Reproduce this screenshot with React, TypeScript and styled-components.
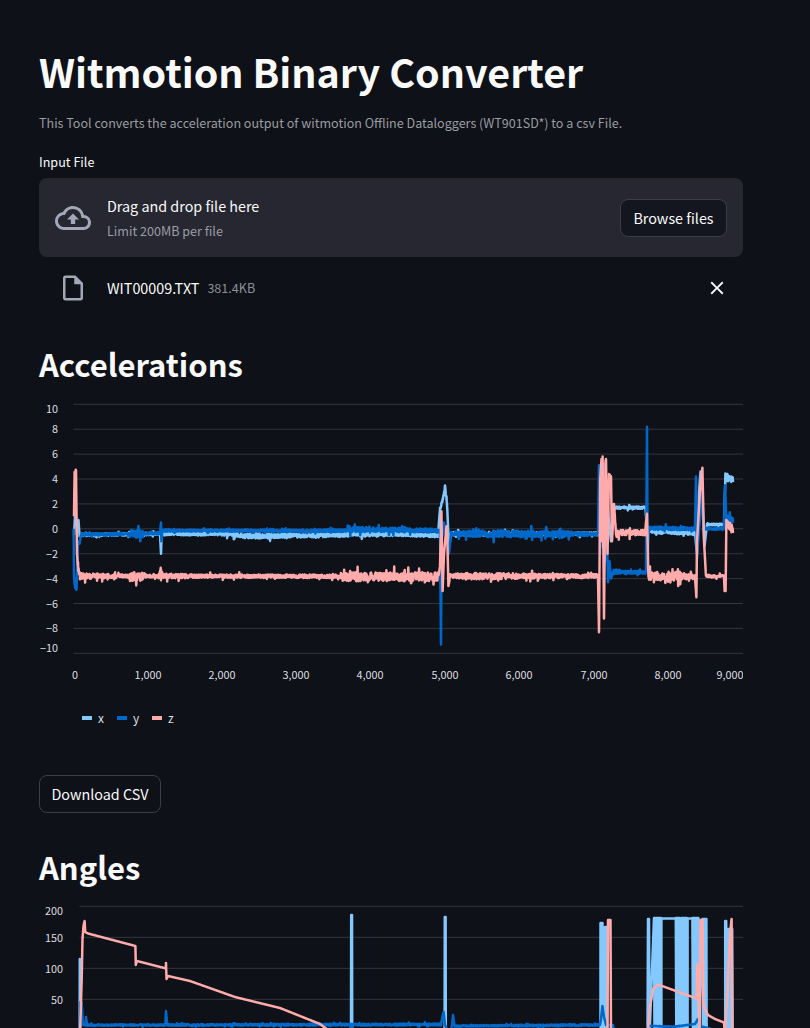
import { useMemo } from "react";
import styled, { createGlobalStyle } from "styled-components";
import { MdClose, MdOutlineCloudUpload, MdOutlineInsertDriveFile } from "react-icons/md";

const FONT = `"Noto Sans CJK SC", "Source Sans Pro", "Noto Sans", sans-serif`;
const LIGHT = "#83c9ff";
const BLUE = "#0068c9";
const PINK = "#ffabab";

const GlobalStyle = createGlobalStyle`
  html, body {
    margin: 0;
    height: 100%;
    overflow: hidden;
    background: #0e1117;
  }
  body {
    font-family: ${FONT};
    color: #fafafa;
  }
`;

const Page = styled.main`
  width: 704px;
  padding: 44px 0 0 39px;
`;

const Title = styled.h1`
  margin: 0;
  font-size: 39.4px;
  line-height: 53px;
  font-weight: 700;
  color: #fafafa;
`;

const Intro = styled.p`
  margin: 15px 0 0;
  font-size: 12.55px;
  line-height: 22px;
  color: #9a9ca1;
`;

const FieldLabel = styled.label`
  display: block;
  margin-top: 18px;
  font-size: 12.6px;
  line-height: 20px;
  color: #fafafa;
`;

const Dropzone = styled.section`
  display: flex;
  align-items: center;
  height: 79px;
  margin-top: 6px;
  padding: 0 16px;
  box-sizing: border-box;
  background: #262730;
  border-radius: 8px;
`;

const CloudIcon = styled(MdOutlineCloudUpload)`
  width: 36px;
  height: 36px;
  color: #a3a8b8;
  flex: none;
`;

const DropText = styled.div`
  display: flex;
  flex-direction: column;
  margin-left: 16px;
  flex: 1;
`;

const DropTitle = styled.span`
  font-size: 14.35px;
  line-height: 24px;
`;

const DropLimit = styled.span`
  margin-top: 3px;
  font-size: 12.6px;
  line-height: 20px;
  color: #9a9da6;
`;

const OutlineButton = styled.button`
  width: 107px;
  height: 38px;
  padding: 0;
  font-family: ${FONT};
  font-size: 14.35px;
  line-height: 24px;
  color: #fafafa;
  background: #13161e;
  border: 1px solid #3c3e47;
  border-radius: 8px;
`;

const FileRow = styled.div`
  display: flex;
  align-items: center;
  height: 30px;
  margin-top: 16px;
  padding: 0 15px 0 19px;
`;

const FileIcon = styled(MdOutlineInsertDriveFile)`
  width: 30px;
  height: 30px;
  color: #a3a8b8;
  flex: none;
`;

const FileName = styled.span`
  margin-left: 19px;
  font-size: 14.35px;
  line-height: 24px;
  color: #fafafa;
`;

const FileSize = styled.span`
  margin-left: 8px;
  font-size: 12.6px;
  line-height: 24px;
  color: #8d8f96;
  flex: 1;
`;

const CloseIcon = styled(MdClose)`
  width: 22px;
  height: 22px;
  color: #fafafa;
  flex: none;
`;

const SectionTitle = styled.h2<{ $top: number }>`
  margin: ${(p) => p.$top}px 0 0;
  font-size: 31px;
  line-height: 44px;
  font-weight: 700;
  color: #fafafa;
`;

const ChartSvg = styled.svg<{ $top: number }>`
  display: block;
  width: 704px;
  margin-top: ${(p) => p.$top}px;
`;

const GridLine = styled.line`
  stroke: #34363d;
  stroke-width: 1;
`;

const AxisText = styled.text`
  font-family: ${FONT};
  font-size: 10.8px;
  fill: #dedfe0;
`;

const Trace = styled.path<{ $color: string }>`
  fill: none;
  stroke: ${(p) => p.$color};
  stroke-width: 2.5;
  stroke-linejoin: round;
`;

const Legend = styled.div`
  display: flex;
  height: 20px;
  margin-top: 24px;
  padding-left: 43px;
`;

const LegendItem = styled.span`
  display: flex;
  align-items: center;
  gap: 6px;
  width: 35px;
  font-size: 12px;
  line-height: 20px;
  color: #dedfe0;
`;

const Swatch = styled.i<{ $color: string }>`
  width: 10px;
  height: 4px;
  background: ${(p) => p.$color};
`;

const DownloadButton = styled(OutlineButton)`
  display: block;
  width: 122px;
  margin-top: 47px;
  background: #0e1117;
`;

// x = page pixel, y = data value, third = noise amplitude
type Key = [number, number, number?];

function makeRandom(seed: number) {
  let a = seed;
  return () => {
    a = (a + 0x6d2b79f5) | 0;
    let t = Math.imul(a ^ (a >>> 15), 1 | a);
    t = (t + Math.imul(t ^ (t >>> 7), 61 | t)) ^ t;
    return ((t ^ (t >>> 14)) >>> 0) / 4294967296;
  };
}

function tracePath(keys: Key[], toY: (v: number) => number, seed: number) {
  const rand = makeRandom(seed);
  let d = "";
  for (let i = 0; i < keys.length - 1; i++) {
    const [x0, v0, a0 = 0] = keys[i];
    const [x1, v1, a1 = 0] = keys[i + 1];
    const steps = Math.max(1, Math.round((x1 - x0) / 0.3));
    for (let s = 0; s <= steps; s++) {
      const t = s / steps;
      const amp = a0 + (a1 - a0) * t;
      const jag = rand() < 0.06 ? 2.4 : 1;
      const v = v0 + (v1 - v0) * t + amp * jag * (rand() * 2 - 1);
      d += `${d ? "L" : "M"}${(x0 + (x1 - x0) * t).toFixed(2)} ${toY(v).toFixed(2)}`;
    }
  }
  return d;
}

const accelX: Key[] = [
  [74, -0.5], [75, 1], [77, 0.2], [78.5, 0.7], [79.5, -0.5, 0.1], [160, -0.4, 0.1], [161, -2], [161.6, -0.4, 0.12],
  [225, -0.4, 0.14], [250, -0.6, 0.2], [300, -0.55, 0.16], [360, -0.45, 0.16], [400, -0.45, 0.14], [438, -0.55, 0.14],
  [440, 1.6, 0.1], [443, 2.4, 0.2], [445, 3.4, 0.1], [447, 2, 0.1], [449, -1.5], [451, -0.4, 0.15], [598, -0.4, 0.12],
  [600, 2, 0.1], [601, 5], [603, -1.5], [606, 4], [609, 0.5], [611, -1], [612.5, 1.7, 0.1], [645.5, 1.7, 0.1],
  [647, -0.2, 0.15], [695, -0.35, 0.16], [697, -2], [699, 3], [700.5, 4.6], [703, 1], [704.5, -1.4], [707, 0.35, 0.06],
  [724, 0.35, 0.06], [725.4, 4.2, 0.3], [728, 4.1, 0.3], [733, 3.9, 0.22],
];

const accelY: Key[] = [
  [73.6, 0], [74, -3.8], [75, -4.7], [76.5, -4.9], [78, -1], [79.5, -1.2], [81, -0.45, 0.1], [129, -0.42, 0.1], [130, -0.4, 0.32],
  [143, -0.4, 0.28], [144, -0.38, 0.08], [160, -0.35, 0.1], [161, 0.5], [161.4, -1], [162.4, -0.15, 0.08], [345, -0.15, 0.1],
  [350, -0.05, 0.22], [400, -0.1, 0.18], [438, -0.15, 0.15], [440, -0.3], [441, -9.3], [441.6, -1], [444, 0.5], [447, -1], [449, -2], [451, -0.4, 0.14],
  [470, -0.4, 0.24], [500, -0.4, 0.3], [540, -0.4, 0.25], [570, -0.4, 0.2], [598, -0.45, 0.1], [599, 5.1], [600.2, -2], [601, 4.3], [604, 5.2], [605, -2.6], [606, 3],
  [608, -4.3], [609.5, -2.6], [611, -4], [614, -3.4, 0.22], [625, -3.5, 0.12], [646, -3.5, 0.12], [646.6, 3], [647, 8.2], [647.6, -2.2], [649, 0.05, 0.14], [695, 0, 0.14],
  [696, 4.2], [697, -2.3], [699, -0.1], [702, 3], [704, 0, 0.08], [724, 0, 0.08], [725, 3.5], [726.5, 0.4], [728, 0.8, 0.3], [733, 0.6, 0.35],
];

const accelZ: Key[] = [
  [74, 1], [74.6, 4.2, 0.4], [76, 4.5, 0.4], [77, -2], [78, -3, 0.4], [80, -3.8, 0.25], [128, -3.8, 0.12], [130, -3.85, 0.36], [145, -3.85, 0.32], [146, -3.8, 0.12],
  [158, -3.8, 0.12], [161, -3.6, 0.55], [163, -3.8, 0.2], [200, -3.8, 0.13], [340, -3.82, 0.14], [348, -3.85, 0.36], [438, -3.85, 0.35],
  [440, -3], [441.4, 1.4], [442.6, -5], [444, -2], [446.5, 0.2], [447.4, -1], [448.4, -4.6], [450, -3.8, 0.2], [470, -3.8, 0.26], [500, -3.8, 0.24], [560, -3.8, 0.16], [598, -3.8, 0.16],
  [599, -8.3], [600.2, 4], [601.5, 5.6], [602, -1], [602.6, 5.8], [604, -7.2], [605.5, 5.4], [606, 5.6], [607.5, -2], [609, 4.4], [611, 4.2], [612, -1], [614, 2], [616, -0.4, 0.3],
  [620, -0.3, 0.22], [645, -0.3, 0.22], [647, 1.2], [648.4, -3.8, 0.3], [650, -3.8, 0.34], [680, -3.8, 0.36], [695, -3.85, 0.12], [696.4, -5.5], [697, -1], [700, 3], [702.4, 4.9], [704, -1], [706, -3.8, 0.1],
  [724, -3.8, 0.1], [724.6, -5], [725.6, -5], [726.4, 0.6, 0.2], [728, 0.3, 0.35], [733, -0.1, 0.35],
];

const BASE = 1036;

const spike = (x: number, top: number, width = 1): Key[] => [
  [x, BASE],
  [x + width * 0.15, top],
  [x + width * 0.85, top],
  [x + width, BASE],
];

// dense zig-zag: a trace that swings so fast it reads as a solid bar
const fillBlock = (x0: number, x1: number, top: number): Key[] => {
  const keys: Key[] = [];
  for (let x = x0, up = true; x <= x1; x += 0.5, up = !up) keys.push([x, up ? top : BASE]);
  keys.push([x1, BASE]);
  return keys;
};

// angle traces are keyed in page y, so the scale is an identity
const angleX: Key[] = [
  [79.6, BASE], [79.8, 960], [80.2, BASE], [351, BASE],
  ...spike(351, 916, 1.2), [444.4, BASE],
  ...spike(444.6, 918, 1.2), [600.5, BASE],
  ...fillBlock(600.5, 603, 924), ...fillBlock(605, 607, 928), [647.5, BASE],
  ...fillBlock(648, 649.6, 920), ...fillBlock(654, 661.4, 919),
  [661.4, 919.5], [675.8, 919.5],
  ...fillBlock(675.8, 680.4, 919), ...fillBlock(681.8, 687.6, 919), [687.6, 919.5], [692.4, 919.5],
  ...fillBlock(692.4, 698.6, 919), ...fillBlock(702.4, 706.6, 920), [725.2, BASE],
  ...fillBlock(725.2, 726.8, 922), ...fillBlock(728.2, 732.6, 930),
];

const angleY: Key[] = [
  [79.6, BASE], [80.4, 1003], [81.6, 1003], [83, 1026], [85.4, 1026, 0.6], [86, 1018], [87, 1026, 0.7], [165.4, 1026, 0.8], [166, 1012], [167.2, 1026, 0.8],
  [441, 1025.5, 1], [442.4, 1018], [443.6, 1013], [445, 1026], [450, BASE], [452, 1026], [453, 1016], [454.5, 1027, 0.6], [600, 1026, 1],
  [601, 1020], [602.4, 1007], [604, 1018], [606, 1026], [613, 1026], [615, BASE], [646, BASE], [648, 1027], [655, 1027], [662, 1027.5, 0.3], [676, 1027.5, 0.3], [695, 1025], [698, 1020], [700, 1027], [733, BASE],
];

const angleZ: Key[] = [
  [80, BASE], [81.7, 980], [82.5, 940], [83.5, 927], [84.6, 922], [85.2, 933], [88, 934.5], [135.4, 947], [135.8, 966], [137, 962], [165.8, 969.4], [166, 964], [166.5, 980], [168, 977],
  [190, 982], [235, 998], [280, 1009], [320, 1025], [335, BASE], [607.5, BASE], [608, 921], [610.5, 921], [611, BASE], [647.5, BASE], [650, 1008], [653, 990], [658, 985.5], [696.6, 999.5],
  [697.2, 965], [698, 976], [699.6, BASE], [700.4, 921], [702.6, 921], [703.4, 1005], [705, 1010], [708, 1016], [715, 1020], [724, 1023.5], [725, BASE], [727.4, 990], [730, 935], [731.6, 920], [732.4, BASE],
];

const AXIS_TICKS: [number, string][] = [
  [75, "0"], [148, "1,000"], [222, "2,000"], [296, "3,000"], [370, "4,000"], [445, "5,000"], [519, "6,000"], [594, "7,000"], [668, "8,000"], [730, "9,000"],
];

const ACCEL_GRID = [10, 8, 6, 4, 2, 0, -2, -4, -6, -8, -10];
const ANGLE_GRID = [200, 150, 100, 50];

const accelToY = (v: number) => 529.8 - v * 12.45;
const same = (v: number) => v;

// the first and last labels sit inside the plot edge
const accelLabelY = (v: number) => accelToY(v) + 4 + (v === 10 ? 5 : v === -10 ? -5 : 0);

export default function App() {
  const accelTraces = useMemo(
    () => [
      { color: LIGHT, d: tracePath(accelX, accelToY, 11) },
      { color: BLUE, d: tracePath(accelY, accelToY, 23) },
      { color: PINK, d: tracePath(accelZ, accelToY, 37) },
    ],
    []
  );
  const angleTraces = useMemo(
    () => [
      { color: LIGHT, d: tracePath(angleX, same, 5) },
      { color: BLUE, d: tracePath(angleY, same, 7) },
      { color: PINK, d: tracePath(angleZ, same, 9) },
    ],
    []
  );

  return (
    <Page>
      <GlobalStyle />
      <Title>Witmotion Binary Converter</Title>
      <Intro>This Tool converts the acceleration output of witmotion Offline Dataloggers (WT901SD*) to a csv File.</Intro>

      <FieldLabel>Input File</FieldLabel>
      <Dropzone>
        <CloudIcon />
        <DropText>
          <DropTitle>Drag and drop file here</DropTitle>
          <DropLimit>Limit 200MB per file</DropLimit>
        </DropText>
        <OutlineButton>Browse files</OutlineButton>
      </Dropzone>
      <FileRow>
        <FileIcon />
        <FileName>WIT00009.TXT</FileName>
        <FileSize>381.4KB</FileSize>
        <CloseIcon />
      </FileRow>

      <SectionTitle $top={39}>Accelerations</SectionTitle>
      <ChartSvg $top={13} height={285} viewBox="39 400 704 285">
        {ACCEL_GRID.map((v) => (
          <g key={v}>
            <GridLine x1={73.5} x2={743} y1={accelToY(v)} y2={accelToY(v)} />
            <AxisText x={58} y={accelLabelY(v)} textAnchor="end">
              {String(v).replace("-", "\u2212")}
            </AxisText>
          </g>
        ))}
        {AXIS_TICKS.map(([x, label]) => (
          <AxisText key={label} x={x} y={680} textAnchor="middle">
            {label}
          </AxisText>
        ))}
        {accelTraces.map((t) => (
          <Trace key={t.color} $color={t.color} d={t.d} />
        ))}
      </ChartSvg>
      <Legend>
        <LegendItem><Swatch $color={LIGHT} />x</LegendItem>
        <LegendItem><Swatch $color={BLUE} />y</LegendItem>
        <LegendItem><Swatch $color={PINK} />z</LegendItem>
      </Legend>

      <DownloadButton>Download CSV</DownloadButton>

      <SectionTitle $top={32}>Angles</SectionTitle>
      <ChartSvg $top={10} height={140} viewBox="39 900 704 140">
        {ANGLE_GRID.map((v) => {
          const y = 1031.3 - v * 0.62;
          return (
            <g key={v}>
              <GridLine x1={79.5} x2={743} y1={y} y2={y} />
              <AxisText x={63} y={y + (v === 200 ? 9 : 5)} textAnchor="end">{v}</AxisText>
            </g>
          );
        })}
        {angleTraces.map((t) => (
          <Trace key={t.color} $color={t.color} d={t.d} />
        ))}
      </ChartSvg>
    </Page>
  );
}
